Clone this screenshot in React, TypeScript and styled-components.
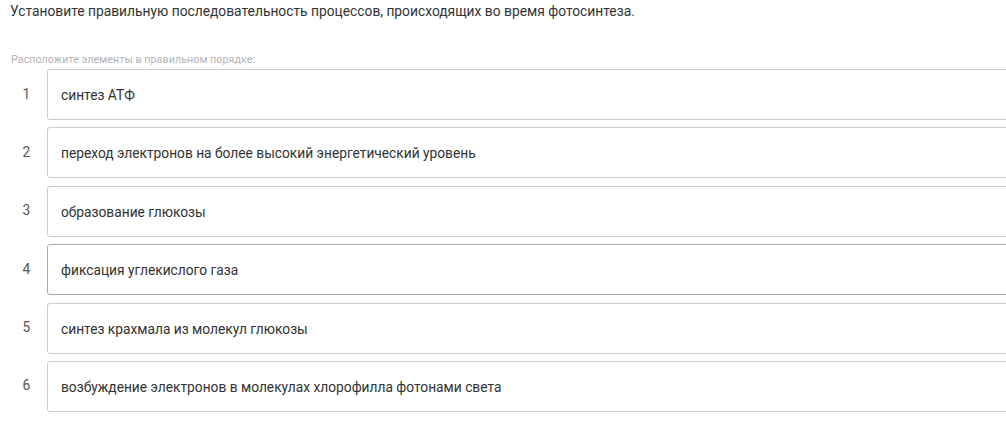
import React from 'react';
import styled, { createGlobalStyle, css } from 'styled-components';

const GlobalStyle = createGlobalStyle`
    html, body {
        margin: 0;
        padding: 0;
        background: #fff;
        overflow: hidden;
    }
    body {
        font-family: Roboto, "Noto Sans", sans-serif;
        color: #333;
    }
`;

const items = [
    'синтез АТФ',
    'переход электронов на более высокий энергетический уровень',
    'образование глюкозы',
    'фиксация углекислого газа',
    'синтез крахмала из молекул глюкозы',
    'возбуждение электронов в молекулах хлорофилла фотонами света',
];

const App: React.FC = () => {
    return (
        <Page>
            <GlobalStyle />
            <Question>Установите правильную последовательность процессов, происходящих во время фотосинтеза.</Question>
            <Hint>Расположите элементы в правильном порядке:</Hint>
            <List>
                {items.map((text, i) => (
                    <Row key={i}>
                        <Num>{i + 1}</Num>
                        <Item hovered={i === 3}>{text}</Item>
                    </Row>
                ))}
            </List>
        </Page>
    );
};

const Page = styled.div`
    padding: 1px 0 0 10px;
    overflow: hidden;
`;

const Question = styled.div`
    font-size: 13.8px;
    line-height: 18px;
    color: #333;
    margin-top: 1px;
`;

const Hint = styled.div`
    font-size: 10.8px;
    line-height: 14px;
    color: #b4b4b4;
    margin-top: 33px;
    padding-left: 1px;
`;

const List = styled.div`
    display: flex;
    flex-direction: column;
    gap: 7.4px;
    margin-top: 2px;
    margin-right: -20px;
`;

const Row = styled.div`
    display: flex;
    align-items: center;
`;

const Num = styled.div`
    width: 37px;
    padding-right: 4px;
    box-sizing: border-box;
    text-align: center;
    font-size: 13.8px;
    color: #555;
    margin-top: -2px;
`;

const Item = styled.div<{ hovered: boolean }>`
    flex: 1;
    height: 51px;
    box-sizing: border-box;
    display: flex;
    align-items: center;
    padding: 1px 13px 0;
    border: 1px solid #cccccc;
    border-radius: 3px;
    font-size: 13.75px;
    color: #333;

    ${props =>
        props.hovered &&
        css`
            border-color: #aaaaaa;
        `}
`;

export default App;
